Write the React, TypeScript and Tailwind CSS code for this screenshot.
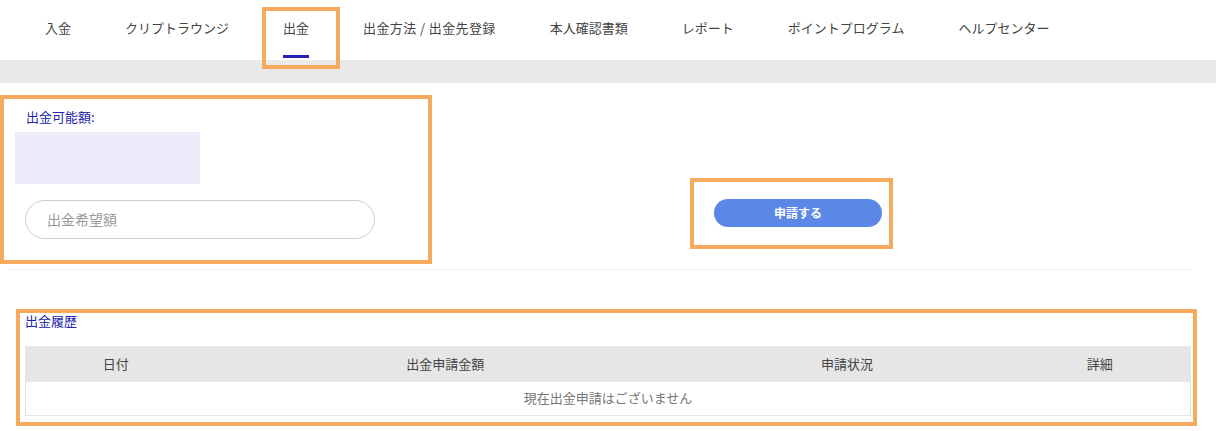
import React from "react";

const tabs = [
  "入金",
  "クリプトラウンジ",
  "出金",
  "出金方法 / 出金先登録",
  "本人確認書類",
  "レポート",
  "ポイントプログラム",
  "ヘルプセンター",
];

const cols = [
  { label: "日付", w: "w-[180px]" },
  { label: "出金申請金額", w: "w-[480px]" },
  { label: "申請状況", w: "w-[325px]" },
  { label: "詳細", w: "w-[181px]" },
];

function Highlight({ className }: { className: string }) {
  return <div className={`pointer-events-none absolute border-4 border-[#f6aa5e] ${className}`} />;
}

export default function App() {
  return (
    <div className="relative h-[431px] w-[1216px] overflow-hidden bg-white font-['Noto_Sans_CJK_JP','Noto_Sans',sans-serif] text-[13px] text-[#333]">
      <nav className="flex h-[60px] items-stretch pl-[18px]">
        {tabs.map((t) => (
          <div key={t} className="relative flex items-center px-[27px] pb-[4px]">
            <span className={t === "出金方法 / 出金先登録" ? "tracking-[0.4px] text-[#444]" : "text-[#444]"}>{t}</span>
            {t === "出金" && (
              <span className="absolute bottom-[2px] left-[27px] right-[27px] h-[3px] bg-[#2424b4]" />
            )}
          </div>
        ))}
      </nav>

      <div className="h-[23px] bg-[#e9e9e9]" />

      <section className="mx-[8px] flex h-[187px] w-[1184px] border-b border-[#eeeeee]">
        <div className="w-[480px] pt-[24px]">
          <div className="pl-[18px] text-[#2222aa]">出金可能額:</div>
          <div className="ml-[7px] mt-[5px] h-[52px] w-[185px] bg-[#ececfa]" />
          <div className="ml-[17px] mt-[16px] flex h-[39px] w-[350px] items-center rounded-full border border-[#cccccc] pl-[21px] text-[14px] text-[#9a9a9a]">
            出金希望額
          </div>
        </div>
        <div className="flex flex-1 items-start pl-[226px] pt-[116px]">
          <button className="h-[28px] w-[168px] rounded-full bg-[#5b87e6] text-[12px] font-bold text-white">
            申請する
          </button>
        </div>
      </section>

      <section className="ml-[25px] mt-[42px] w-[1166px]">
        <div className="-mt-[1px] text-[#2222aa]">出金履歴</div>
        <div className="mt-[15px] border border-[#e6e6e6]">
          <div className="flex h-[35px] bg-[#e6e6e6]">
            {cols.map((c) => (
              <div key={c.label} className={`${c.w} flex items-center justify-center text-[#444]`}>
                {c.label}
              </div>
            ))}
          </div>
          <div className="flex h-[33px] items-center justify-center text-[#777]">現在出金申請はございません</div>
        </div>
      </section>

      <Highlight className="left-[262px] top-[7px] h-[62px] w-[78px]" />
      <Highlight className="left-0 top-[95px] h-[169px] w-[432px]" />
      <Highlight className="left-[690px] top-[178px] h-[71px] w-[203px]" />
      <Highlight className="left-[16px] top-[309px] h-[117px] w-[1181px]" />
    </div>
  );
}
